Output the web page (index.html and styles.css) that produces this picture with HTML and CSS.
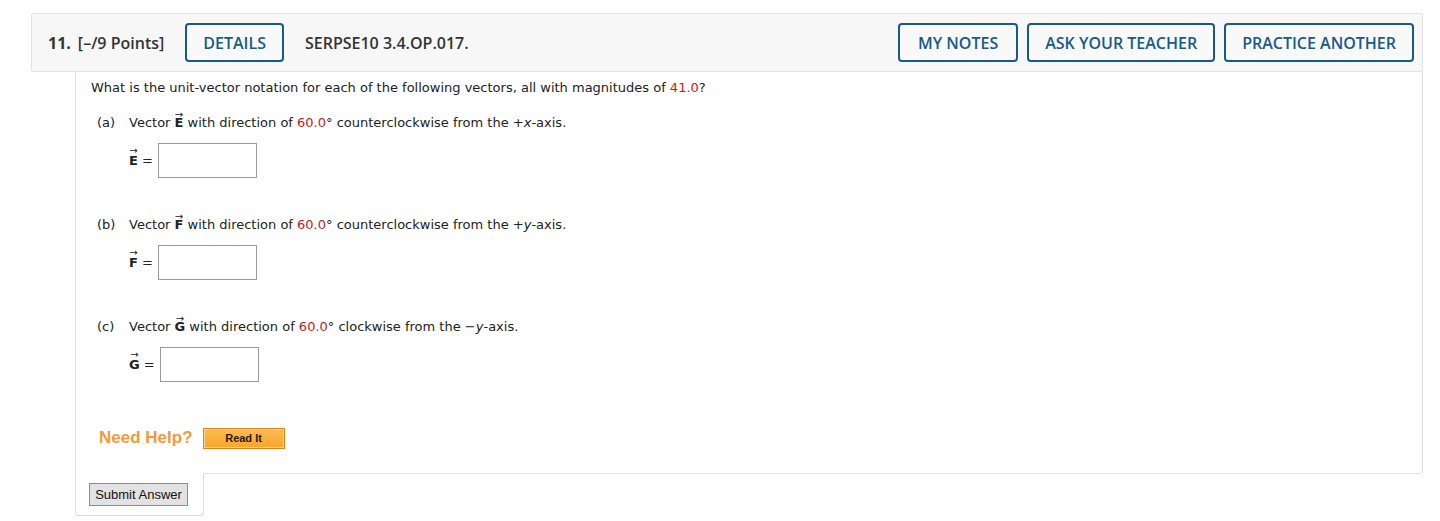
FILE: index.html
```html
<!DOCTYPE html>
<html>
<head>
<meta charset="utf-8">
<link rel="stylesheet" href="styles.css">
</head>
<body>
<div class="question">
  <div class="q-head">
    <span class="q-num">11.</span>
    <span class="q-points">[–/9 Points]</span>
    <button class="btn-outline">DETAILS</button>
    <span class="q-code">SERPSE10 3.4.OP.017.</span>
    <div class="q-actions">
      <button class="btn-outline btn-notes">MY NOTES</button>
      <button class="btn-outline">ASK YOUR TEACHER</button>
      <button class="btn-outline">PRACTICE ANOTHER</button>
    </div>
  </div>
  <div class="q-body">
    <p class="intro">What is the unit-vector notation for each of the following vectors, all with magnitudes of <span class="red">41.0</span>?</p>

    <div class="part">
      <div class="part-line"><span class="part-label">(a)</span><span>Vector <span class="vec">E</span> with direction of <span class="red">60.0</span>° counterclockwise from the +<i>x</i>-axis.</span></div>
      <div class="answer"><span class="vec">E</span><span class="eq">=</span><input class="ans-input" type="text"></div>
    </div>

    <div class="part">
      <div class="part-line"><span class="part-label">(b)</span><span>Vector <span class="vec">F</span> with direction of <span class="red">60.0</span>° counterclockwise from the +<i>y</i>-axis.</span></div>
      <div class="answer"><span class="vec">F</span><span class="eq">=</span><input class="ans-input" type="text"></div>
    </div>

    <div class="part">
      <div class="part-line"><span class="part-label">(c)</span><span>Vector <span class="vec">G</span> with direction of <span class="red">60.0</span>° clockwise from the −<i>y</i>-axis.</span></div>
      <div class="answer"><span class="vec">G</span><span class="eq">=</span><input class="ans-input" type="text"></div>
    </div>

    <div class="help">
      <span class="help-text">Need Help?</span>
      <button class="read-it">Read It</button>
    </div>
  </div>
  <div class="q-submit">
    <button class="submit-btn">Submit Answer</button>
  </div>
</div>
</body>
</html>
```
FILE: styles.css
```css
* { box-sizing: border-box; }
html, body { margin: 0; background: #fff; }
body { padding: 13px 17px 0 31px; }

.question { width: 1392px; }

.q-head {
  display: flex;
  align-items: center;
  height: 59px;
  padding: 0 8px 0 16px;
  background: #f7f7f7;
  border: 1px solid #e3e3e3;
  border-radius: 2px;
  font-family: "Open Sans", sans-serif;
  font-weight: 600;
  font-size: 16px;
  color: #333;
}
.q-num { margin-right: 7px; font-weight: 700; }
.q-points { margin-right: 21px; }
.q-code { margin-left: 21px; }
.q-actions { margin-left: auto; display: flex; gap: 9px; }

.btn-outline {
  height: 39px;
  padding: 0 16px;
  background: #f9f9f9;
  border: 2px solid #165b8b;
  border-radius: 4px;
  color: #165b8b;
  font-family: "Open Sans", sans-serif;
  font-weight: 600;
  font-size: 16px;
}
.btn-notes { padding: 0 18px; }

.q-body {
  margin-left: 44px;
  border-left: 1px solid #dcdcdc;
  border-right: 1px solid #dcdcdc;
  border-bottom: 1px solid #e3e3e3;
  border-bottom-right-radius: 4px;
  padding: 8px 0 24px 15px;
  font-family: "DejaVu Sans", Verdana, sans-serif;
  font-size: 13px;
  color: #222;
}
.intro { margin: 0; line-height: 16px; }
.red { color: #c41a1a; }

.part { height: 102px; padding-top: 19px; }
.part-line { display: flex; line-height: 16px; }
.part-label { width: 38px; padding-left: 6px; }

.vec { position: relative; font-weight: bold; }
.vec::before {
  content: "→";
  position: absolute;
  left: 0; right: 0;
  top: -0.85em;
  text-align: center;
  font-size: 10px;
  font-weight: normal;
}

.answer {
  display: flex;
  align-items: center;
  margin: 12px 0 0 38px;
  height: 35px;
}
.answer .vec { margin-right: 4px; }
.eq { margin-right: 5px; }
.ans-input {
  width: 99px;
  height: 35px;
  border: 1px solid #9a9a9a;
  background: #fff;
  margin: 0;
  padding: 0;
}

.help {
  display: flex;
  align-items: center;
  padding-left: 8px;
  margin-top: 25px;
  height: 22px;
}
.help-text {
  font-family: "Liberation Sans", Arial, sans-serif;
  font-weight: bold;
  font-size: 17px;
  color: #f39a3a;
  margin-right: 10px;
}
.read-it {
  width: 82px;
  height: 21px;
  padding: 0;
  background: linear-gradient(#fcbb4f, #f9a52c);
  border: 1px solid #e0801a;
  box-shadow: inset 0 0 0 1px #ffd68a;
  font-family: "Liberation Sans", Arial, sans-serif;
  font-weight: bold;
  font-size: 11px;
  color: #2a1a00;
}

.q-submit {
  position: relative;
  margin: -1px 0 0 44px;
  width: 129px;
  height: 43px;
  background: #fff;
  border-left: 1px solid #dcdcdc;
  border-right: 1px solid #dcdcdc;
  border-bottom: 1px solid #dcdcdc;
  border-radius: 0 0 4px 4px;
  padding: 10px 0 0 13px;
}
.submit-btn {
  width: 99px;
  height: 23px;
  padding: 0;
  background: #e2e2e2;
  border: 1px solid #8c8c8c;
  font-family: "Liberation Sans", Arial, sans-serif;
  font-size: 13px;
  color: #111;
}
```
